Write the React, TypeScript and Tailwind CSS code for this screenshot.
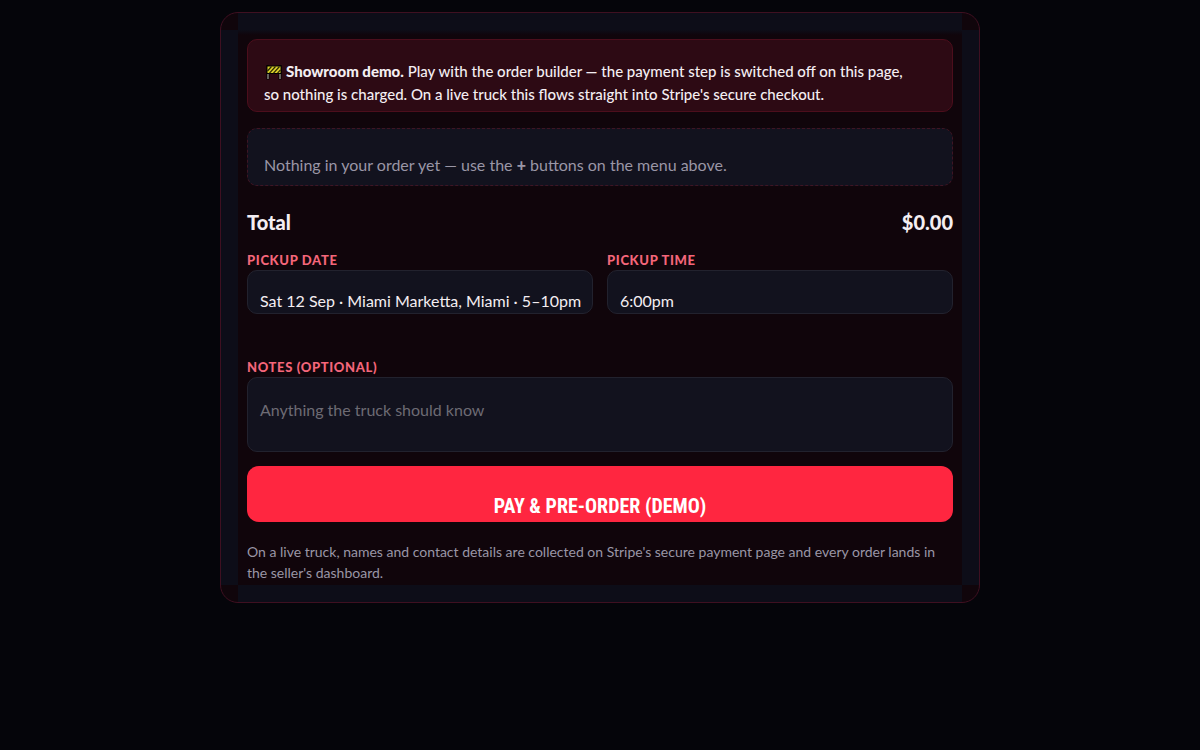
import { useState } from 'react';
import type { ReactNode } from 'react';

const pickupDates = ['Sat 12 Sep · Miami Marketta, Miami · 5–10pm'];
const pickupTimes = ['6:00pm', '6:15pm', '6:30pm', '6:45pm', '7:00pm'];

const fieldClass =
  'block w-full appearance-none rounded-[10px] border border-[#22222e] bg-[#12121e] pl-3 text-base text-[#f4eef2] outline-none focus:border-[#ff2640]';

function BarrierIcon() {
  return (
    <svg viewBox="0 0 16 16" className="mr-1 ml-0.5 inline-block size-4 align-[-3px]" aria-hidden="true">
      <path d="M2 1v14.500M14 1v14.500" stroke="#000" strokeWidth="3" />
      <path d="M2 9v6M14 9v6" stroke="#8d8a84" strokeWidth="1.4" />
      <rect x="1" y="2" width="14" height="7.5" fill="#d9d02a" stroke="#000" />
      <path d="M1.500 7l4-4.500M3.500 9.200l6-6.700M7.500 9.200l6-6.700M11.500 9.200l3-3.300" stroke="#2a2706" strokeWidth="1.2" />
    </svg>
  );
}

interface FieldProps {
  id: string;
  label: string;
  children: ReactNode;
}

function Field({ id, label, children }: FieldProps) {
  return (
    <div className="min-w-0">
      <label
        htmlFor={id}
        className="block text-[13px] leading-5 font-black tracking-wider text-[#f4667a] uppercase"
      >
        {label}
      </label>
      {children}
    </div>
  );
}

export default function App() {
  const [date, setDate] = useState(pickupDates[0]);
  const [time, setTime] = useState(pickupTimes[0]);
  const [notes, setNotes] = useState('');

  return (
    <main className="min-h-screen bg-[#05050a] pt-3 font-['Lato','Liberation_Sans',sans-serif] text-[#f4eef2]">
      <form
        onSubmit={(e) => e.preventDefault()}
        className="mx-auto max-w-[760px] rounded-[18px] border border-[#3f1021] bg-[#10050b] bg-[linear-gradient(#0d0d18_17px,#10050b_22px,#10050b_calc(100%-17px),#0d0d18_calc(100%-17px)),linear-gradient(to_right,#0d0d18_17px,transparent_17px,transparent_calc(100%-17px),#0d0d18_calc(100%-17px))] bg-[size:calc(100%-34px)_100%,100%_calc(100%-34px)] bg-center bg-no-repeat px-[26px] pt-[26px] pb-[19px]"
      >
        <p className="rounded-[10px] border border-[#4c0e1c] bg-[#2d0a14] px-4 pt-5 pb-[5px] text-[15px] leading-[23px] font-medium">
          <BarrierIcon />
          <strong className="font-black">Showroom demo.</strong> Play with the order builder — the payment step is
          switched off on this page, <br className="hidden md:block" />
          so nothing is charged. On a live truck this flows straight into Stripe's secure checkout.
        </p>

        <p className="mt-4 rounded-[10px] border border-dashed border-[#3f1524] bg-[#12121e] px-4 pt-6 pb-2 text-base text-[#9a96a6]">
          Nothing in your order yet — use the <b className="font-black">+</b> buttons on the menu above.
        </p>

        <div className="mt-[22px] flex items-center justify-between text-xl font-black">
          <span>Total</span>
          <span>$0.00</span>
        </div>

        <div className="mt-[14px] grid grid-cols-2 gap-[14px]">
          <Field id="pickup-date" label="Pickup date">
            <select
              id="pickup-date"
              value={date}
              onChange={(e) => setDate(e.target.value)}
              className={`${fieldClass} h-11 pt-[18px]`}
            >
              {pickupDates.map((d) => (
                <option key={d}>{d}</option>
              ))}
            </select>
          </Field>
          <Field id="pickup-time" label="Pickup time">
            <select
              id="pickup-time"
              value={time}
              onChange={(e) => setTime(e.target.value)}
              className={`${fieldClass} h-11 pt-[18px]`}
            >
              {pickupTimes.map((t) => (
                <option key={t}>{t}</option>
              ))}
            </select>
          </Field>
        </div>

        <div className="mt-[43px]">
          <Field id="notes" label="Notes (optional)">
            <textarea
              id="notes"
              value={notes}
              onChange={(e) => setNotes(e.target.value)}
              placeholder="Anything the truck should know"
              className={`${fieldClass} h-[75px] resize-none pt-5 placeholder:text-[#6d6b74]`}
            />
          </Field>
        </div>

        <button
          type="submit"
          className="mt-[14px] block h-14 w-full rounded-xl bg-[#ff2640] pt-6 font-['Roboto_Condensed','Liberation_Sans_Narrow',sans-serif] text-xl leading-8 font-bold text-white uppercase"
        >
          Pay &amp; pre-order (demo)
        </button>

        <p className="mt-[19px] text-sm leading-[21px] text-[#9a96a6]">
          On a live truck, names and contact details are collected on Stripe's secure payment page and every order
          lands in the seller's dashboard.
        </p>
      </form>
    </main>
  );
}
